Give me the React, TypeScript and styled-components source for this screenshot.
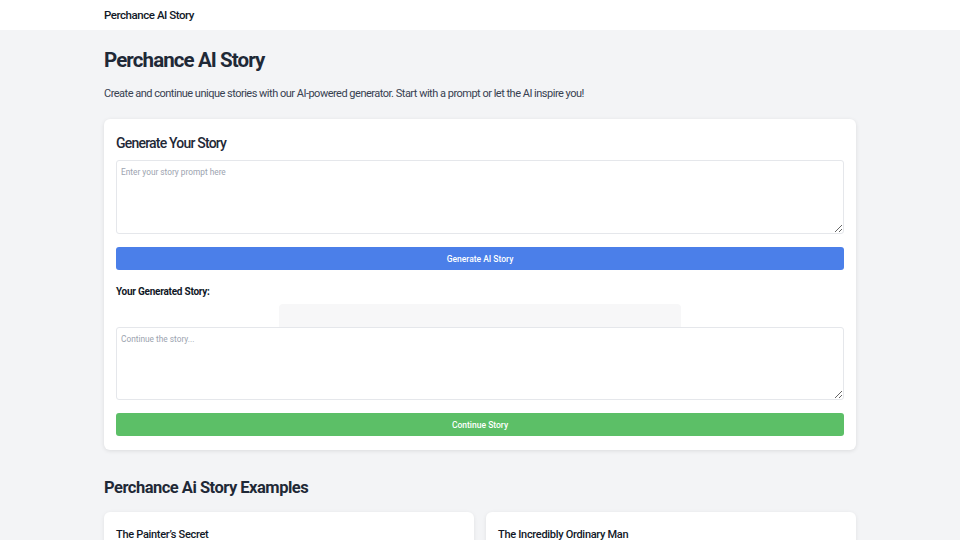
import styled, { createGlobalStyle } from 'styled-components'

const GlobalStyles = createGlobalStyle`
  html, body {
    margin: 0;
    padding: 0;
    background: #f3f4f6;
    font-family: Roboto, 'Noto Sans', 'Liberation Sans', sans-serif;
    color: #1f2937;
  }
  * { box-sizing: border-box; }
`

const NavBar = styled.header`
  height: 30px;
  background: #ffffff;
  display: flex;
  align-items: center;
`

const Container = styled.div`
  width: 752px;
  margin: 0 auto;
`

const NavTitle = styled.div`
  font-size: 11.5px;
  font-weight: 500;
  letter-spacing: -0.45px;
  color: #111827;
`

const Main = styled(Container)`
  padding-top: 17px;
  padding-bottom: 20px;
`

const PageTitle = styled.h1`
  margin: 0;
  font-size: 20.5px;
  line-height: 26px;
  font-weight: 700;
  letter-spacing: -0.9px;
  color: #1f2937;
`

const Intro = styled.p`
  margin: 12px 0 16px;
  font-size: 11px;
  line-height: 18px;
  letter-spacing: -0.5px;
  color: #374151;
`

const Card = styled.section`
  background: #ffffff;
  border-radius: 6px;
  box-shadow: 0 1px 4px rgba(0, 0, 0, 0.1);
  padding: 14px 12px 14px;
  display: flex;
  flex-direction: column;
`

const CardTitle = styled.h2`
  margin: 0 0 7px;
  font-size: 14px;
  line-height: 20px;
  font-weight: 500;
  letter-spacing: -0.8px;
  color: #1f2937;
`

const TextArea = styled.textarea<{ $h: number }>`
  display: block;
  width: 100%;
  height: ${(p) => p.$h}px;
  border: 1px solid #e5e7eb;
  border-radius: 3px;
  padding: 6px 4px;
  font-family: inherit;
  font-size: 8.3px;
  color: #374151;
  resize: vertical;
  outline: none;
  &::placeholder {
    color: #9ca3af;
  }
`

const ActionButton = styled.button<{ $tone: 'blue' | 'green' }>`
  margin-top: 13px;
  width: 100%;
  height: 23px;
  border: none;
  border-radius: 3px;
  background: ${(p) => (p.$tone === 'blue' ? '#4b7fe9' : '#5cbf67')};
  color: #ffffff;
  font-family: inherit;
  font-size: 8.5px;
  font-weight: 500;
  cursor: pointer;
`

const OutputLabel = styled.h3`
  margin: 15px 0 5px;
  font-size: 10px;
  line-height: 14px;
  font-weight: 700;
  letter-spacing: -0.25px;
  color: #111827;
`

const StoryOutput = styled.div`
  align-self: center;
  width: 402px;
  height: 23px;
  background: #f7f7f8;
  border-radius: 4px 4px 0 0;
`

const SectionTitle = styled.h2`
  margin: 27px 0 13px;
  font-size: 16.5px;
  line-height: 22px;
  font-weight: 700;
  letter-spacing: -0.5px;
  color: #1f2937;
`

const ExampleGrid = styled.div`
  display: grid;
  grid-template-columns: 1fr 1fr;
  gap: 12px;
`

const ExampleCard = styled.article`
  background: #ffffff;
  border-radius: 6px;
  box-shadow: 0 1px 4px rgba(0, 0, 0, 0.08);
  padding: 16px 12px;
  min-height: 120px;
`

const ExampleTitle = styled.h3`
  margin: 0;
  font-size: 11px;
  line-height: 14px;
  font-weight: 500;
  letter-spacing: -0.3px;
  color: #111827;
`

const examples = ['The Painter\u2019s Secret', 'The Incredibly Ordinary Man']

export default function App() {
  return (
    <>
      <GlobalStyles />
      <NavBar>
        <Container>
          <NavTitle>Perchance AI Story</NavTitle>
        </Container>
      </NavBar>
      <Main>
        <PageTitle>Perchance AI Story</PageTitle>
        <Intro>
          Create and continue unique stories with our AI-powered generator. Start with a prompt or let
          the AI inspire you!
        </Intro>
        <Card>
          <CardTitle>Generate Your Story</CardTitle>
          <TextArea $h={74} placeholder="Enter your story prompt here" />
          <ActionButton $tone="blue">Generate AI Story</ActionButton>
          <OutputLabel>Your Generated Story:</OutputLabel>
          <StoryOutput />
          <TextArea $h={73} placeholder="Continue the story..." />
          <ActionButton $tone="green">Continue Story</ActionButton>
        </Card>
        <SectionTitle>Perchance Ai Story Examples</SectionTitle>
        <ExampleGrid>
          {examples.map((title) => (
            <ExampleCard key={title}>
              <ExampleTitle>{title}</ExampleTitle>
            </ExampleCard>
          ))}
        </ExampleGrid>
      </Main>
    </>
  )
}
